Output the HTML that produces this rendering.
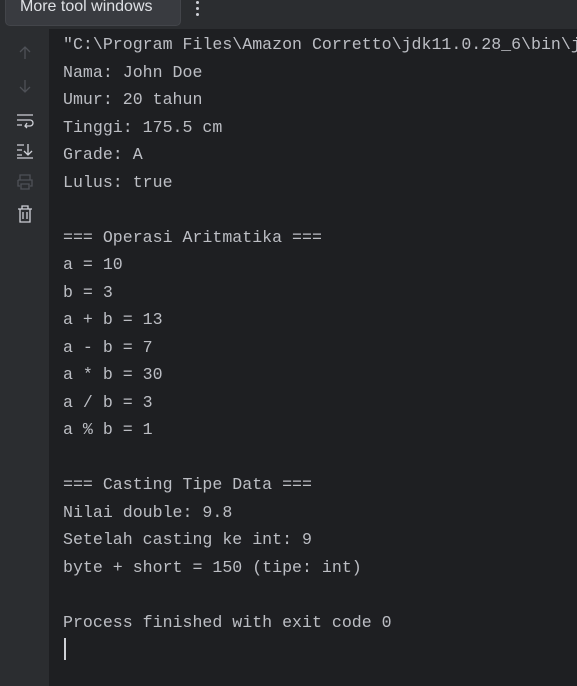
<!DOCTYPE html>
<html><head><style>
html,body{margin:0;padding:0;width:577px;height:686px;overflow:hidden;background:#1e1f22;font-family:"Liberation Sans",sans-serif}
#top{position:absolute;left:0;top:0;width:577px;height:29px;background:#2b2d30}
#tip{position:absolute;left:5px;top:-6px;width:176px;height:32px;background:#393b40;border:1px solid #43454a;border-radius:5px;box-sizing:border-box;color:#dfe1e5;font-size:16px;line-height:20px;padding-left:14px;padding-top:2px}
.dot{position:absolute;left:196px;width:3px;height:3px;border-radius:2px;background:#ced0d6}
#side{position:absolute;left:0;top:29px;width:49px;height:657px;background:#2b2d30}
#con{position:absolute;left:63px;top:31px;width:514px;overflow:hidden;color:#bcbec4;font-family:"Liberation Mono","DejaVu Sans Mono",monospace;font-size:16.6px;line-height:27.5px;white-space:pre}
#caret{position:absolute;left:64px;top:638px;width:2px;height:22px;background:#ced0d6}
svg{position:absolute;left:15px}
</style></head><body>
<div id="top"><div id="tip">More tool windows</div><div class="dot" style="top:1px"></div><div class="dot" style="top:7px"></div><div class="dot" style="top:13px"></div></div>
<div id="side">
<svg style="top:14px" width="20" height="20" viewBox="0 0 20 20" fill="none" stroke="#4e5157" stroke-width="1.3"><path d="M10 16V4M5 9l5-5 5 5"/></svg>
<svg style="top:47px" width="20" height="20" viewBox="0 0 20 20" fill="none" stroke="#4e5157" stroke-width="1.3"><path d="M10 4v12M5 11l5 5 5-5"/></svg>
<svg style="top:81px" width="20" height="20" viewBox="0 0 20 20" fill="none" stroke="#ced0d6" stroke-width="1.3"><path d="M2 5h16M2 10h13a3 3 0 010 6h-5M12 13l-2 3 2 2M2 15h5"/></svg>
<svg style="top:111px" width="20" height="20" viewBox="0 0 20 20" fill="none" stroke="#ced0d6" stroke-width="1.3"><path d="M2 5h7M2 10h5M2 15h5M2 18h16M13 4v11M9 11l4 4 4-4"/></svg>
<svg style="top:143px" width="20" height="20" viewBox="0 0 20 20" fill="none" stroke="#4e5157" stroke-width="1.3"><path d="M5 8V3h10v5M3 8h14v6h-2M5 14H3V8M6 12h8v5H6z"/></svg>
<svg style="top:175px" width="20" height="20" viewBox="0 0 20 20" fill="none" stroke="#ced0d6" stroke-width="1.3"><path d="M3 5h14M7 5V2h6v3M5 5v13h10V5M8 8v7M12 8v7"/></svg>
</div>
<div id="con">"C:\Program Files\Amazon Corretto\jdk11.0.28_6\bin\java.exe"
Nama: John Doe
Umur: 20 tahun
Tinggi: 175.5 cm
Grade: A
Lulus: true

=== Operasi Aritmatika ===
a = 10
b = 3
a + b = 13
a - b = 7
a * b = 30
a / b = 3
a % b = 1

=== Casting Tipe Data ===
Nilai double: 9.8
Setelah casting ke int: 9
byte + short = 150 (tipe: int)

Process finished with exit code 0</div>
<div id="caret"></div>
</body></html>
